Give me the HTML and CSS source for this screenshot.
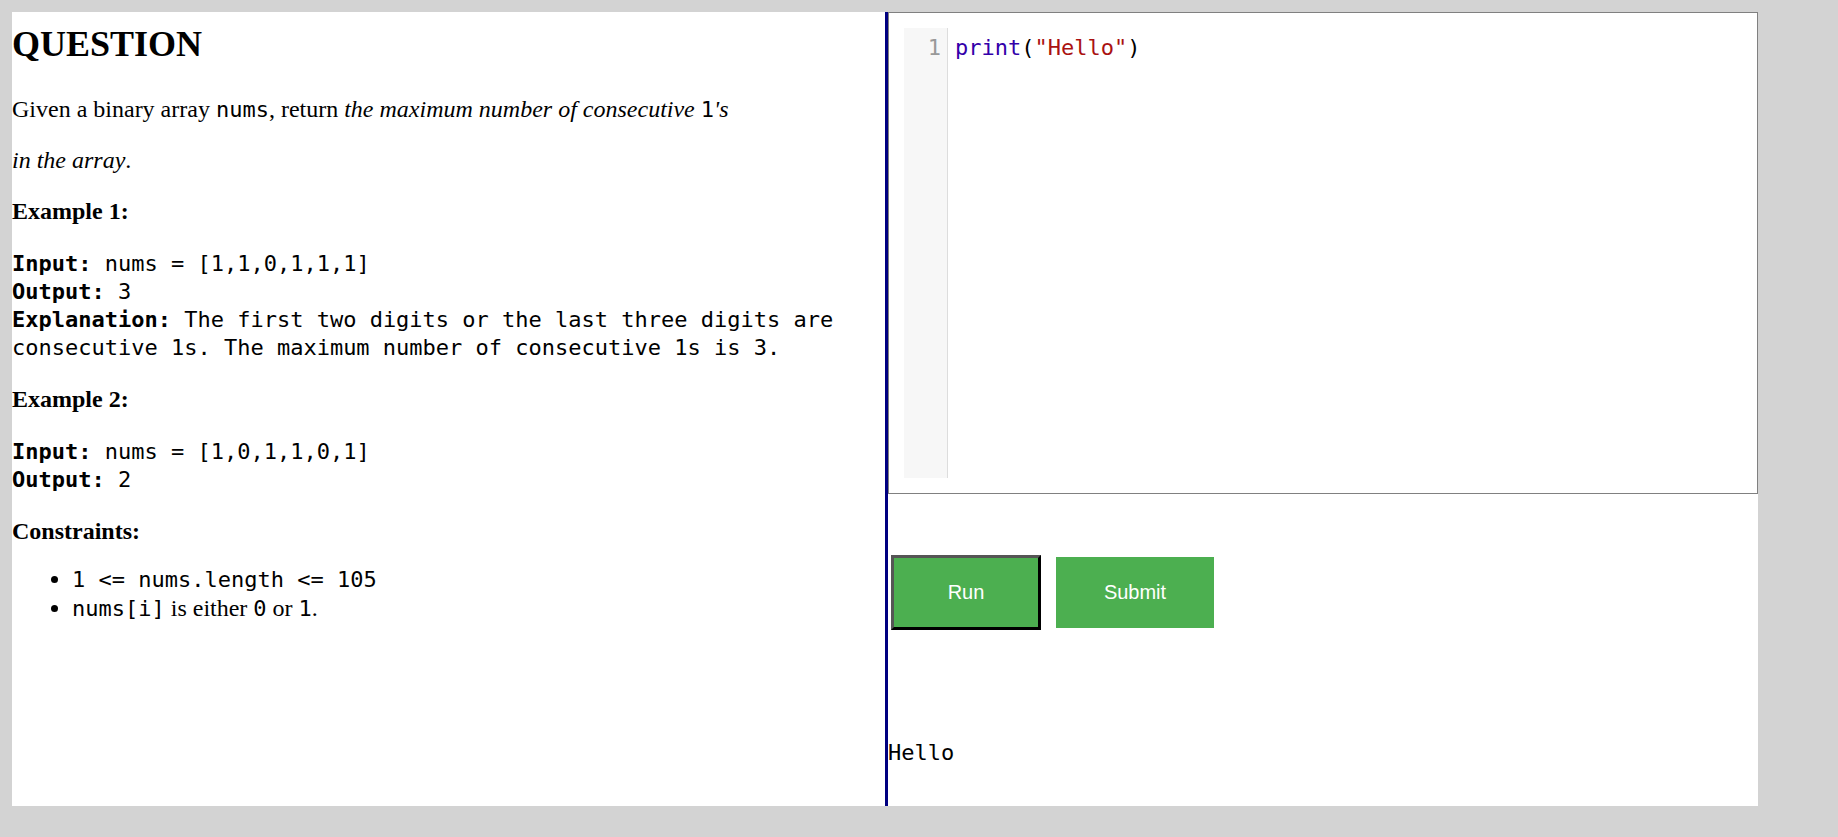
FILE: index.html
```html
<!DOCTYPE html>
<html lang="en">
<head>
<meta charset="utf-8">
<title>Question</title>
<link rel="stylesheet" href="styles.css">
</head>
<body>
<div class="app">
  <section class="question">
    <h2 class="q-title">QUESTION</h2>
    <p>Given a binary array <code>nums</code>, return <em>the maximum number of consecutive </em><code>1</code><em>'s</em></p>
    <p><em>in the array</em>.</p>
    <p><strong>Example 1:</strong></p>
<pre class="example"><strong>Input:</strong> nums = [1,1,0,1,1,1]
<strong>Output:</strong> 3
<strong>Explanation:</strong> The first two digits or the last three digits are consecutive 1s. The maximum number of consecutive 1s is 3.</pre>
    <p><strong>Example 2:</strong></p>
<pre class="example example-last"><strong>Input:</strong> nums = [1,0,1,1,0,1]
<strong>Output:</strong> 2</pre>
    <p class="constraints-title"><strong>Constraints:</strong></p>
    <ul class="constraints">
      <li><code>1 &lt;= nums.length &lt;= 105</code></li>
      <li><code>nums[i]</code> is either <code>0</code> or <code>1</code>.</li>
    </ul>
  </section>
  <section class="workspace">
    <div class="editor">
      <div class="cm">
        <div class="gutter"><div class="lineno">1</div></div>
        <div class="code"><span class="cm-builtin">print</span>(<span class="cm-string">"Hello"</span>)</div>
      </div>
    </div>
    <div class="actions">
      <button class="btn btn-run">Run</button>
      <button class="btn btn-submit">Submit</button>
    </div>
    <div class="output">Hello</div>
  </section>
</div>
</body>
</html>
```
FILE: styles.css
```css
html, body {
  background: #d3d3d3;
}
body {
  margin: 12px;
  font-family: "Liberation Serif", "Times New Roman", serif;
  font-size: 24px;
  color: #000;
}
.app {
  display: flex;
  width: 1746px;
  height: 794px;
  background: #fff;
}
.question {
  flex: none;
  width: 873px;
  height: 794px;
  overflow: hidden;
}
.q-title {
  font-size: 36px;
  font-weight: bold;
  margin: 11px 0 31px;
}
.question p {
  margin: 24px 0;
}
.question code,
.example {
  font-family: "DejaVu Sans Mono", "Liberation Mono", monospace;
  font-size: 22px;
}
.question p code {
  line-height: 1;
}
.example {
  margin: 25px 0 23px;
  line-height: 28px;
  white-space: pre-wrap;
}
.example-last {
  margin-bottom: 21px;
}
.question .constraints-title {
  margin-bottom: 20px;
}
.constraints {
  margin: 20px 0 24px;
  padding-left: 60px;
}
.constraints li {
  line-height: 29px;
}
.workspace {
  flex: none;
  box-sizing: border-box;
  width: 873px;
  height: 794px;
  border-left: 3px solid #000080;
}
.editor {
  border: 1px solid #808080;
  padding: 15px;
  height: 450px;
}
.cm {
  display: flex;
  height: 450px;
  background: #fff;
  font-family: "DejaVu Sans Mono", "Liberation Mono", monospace;
  font-size: 22px;
  line-height: 28px;
}
.gutter {
  width: 43px;
  background: #f7f7f7;
  border-right: 1px solid #ddd;
  padding-top: 6px;
}
.lineno {
  text-align: right;
  padding-right: 6px;
  color: #999;
}
.code {
  padding: 6px 0 0 7px;
  color: #000;
}
.cm-builtin { color: #30a; }
.cm-string { color: #a11; }
.actions {
  display: flex;
  align-items: center;
  gap: 15px;
  margin: 61px 0 0 3px;
}
.btn {
  font-family: "Liberation Sans", Arial, sans-serif;
  font-size: 20px;
  color: #fff;
  background: #4caf50;
  text-align: center;
  box-sizing: border-box;
  padding: 0;
}
.btn-run {
  width: 150px;
  height: 75px;
  border-style: solid;
  border-width: 3px;
  border-color: #555 #000 #000 #555;
}
.btn-submit {
  width: 158px;
  height: 71px;
  border: none;
}
.output {
  margin-top: 109px;
  font-family: "DejaVu Sans Mono", "Liberation Mono", monospace;
  font-size: 22px;
  line-height: 28px;
}
```
